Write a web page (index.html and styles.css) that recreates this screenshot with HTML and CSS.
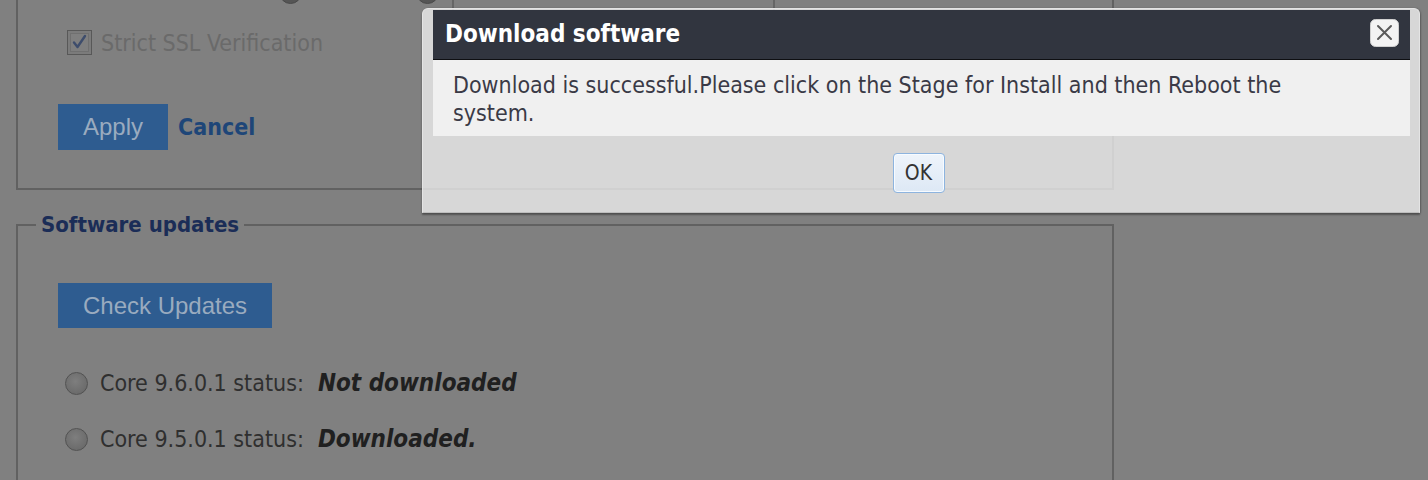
FILE: index.html
```html
<!DOCTYPE html>
<html lang="en">
<head>
<meta charset="utf-8">
<title>Software updates</title>
<link rel="stylesheet" href="styles.css">
</head>
<body>
<div class="page">
  <div class="panel">
    <div class="server-row">
      <span class="radio radio-dark"></span>
      <span class="server-label">Default</span>
      <span class="radio radio-dark radio-second"></span>
      <span class="url-box"></span>
    </div>
    <label class="ssl-row">
      <span class="checkbox">
        <svg width="25" height="25" viewBox="0 0 25 25"><rect x="0.5" y="0.5" width="24" height="24" fill="#7b7b7b" stroke="#585858"/><rect x="3.5" y="3.5" width="18" height="18" fill="#7f7f7f" stroke="#707070"/><path d="M7 12.5 L10.5 17 L18 6" fill="none" stroke="#3e4d6c" stroke-width="2.4" stroke-linecap="round" stroke-linejoin="round"/></svg>
      </span>
      <span class="ssl-text">Strict SSL Verification</span>
    </label>
    <div class="actions">
      <button class="btn-primary btn-apply">Apply</button>
      <a class="cancel-link">Cancel</a>
    </div>
  </div>

  <fieldset class="updates">
    <legend>Software updates</legend>
    <div class="updates-body">
      <button class="btn-primary btn-check">Check Updates</button>
      <div class="core-row first">
        <span class="radio"></span>
        <span class="core-text">Core 9.6.0.1 status:</span>
        <em class="core-status">Not downloaded</em>
      </div>
      <div class="core-row">
        <span class="radio"></span>
        <span class="core-text">Core 9.5.0.1 status:</span>
        <em class="core-status">Downloaded.</em>
      </div>
    </div>
  </fieldset>
</div>

<div class="dialog">
  <div class="dialog-title">
    <span class="dialog-title-text">Download software</span>
    <span class="dialog-close">
      <svg width="29" height="28" viewBox="0 0 29 28"><rect x="0.5" y="0.5" width="28" height="27" rx="5" fill="#f3f3f3" stroke="#d0d0d0"/><path d="M8 7 L21 20 M21 7 L8 20" stroke="#5a5a5a" stroke-width="2" stroke-linecap="round"/></svg>
    </span>
  </div>
  <div class="dialog-body">Download is successful.Please click on the Stage for Install and then Reboot the system.</div>
  <div class="dialog-footer">
    <button class="btn-ok">OK</button>
  </div>
</div>
</body>
</html>
```

FILE: styles.css
```css
* { box-sizing: border-box; }

html, body {
  margin: 0;
  padding: 0;
  height: 480px;
  overflow: hidden;
}

body {
  background: #808080;
  font-family: "DejaVu Sans Condensed", "DejaVu Sans", sans-serif;
  font-stretch: condensed;
  font-size: 23px;
  color: #303030;
  position: relative;
}

.page {
  width: 1428px;
}

/* ---------- first panel (partially scrolled out) ---------- */
.panel {
  margin: -80px 0 0 16px;
  width: 1098px;
  border: 2px solid #616161;
  padding: 0 0 38px 40px;
}

.server-row {
  margin-top: 50px;
  height: 40px;
  display: flex;
  align-items: center;
}

.radio {
  width: 23px;
  height: 23px;
  border-radius: 50%;
  border: 1px solid #525252;
  background: radial-gradient(circle at 45% 40%, #7e7e7e 0%, #6c6c6c 70%, #606060 100%);
  flex: none;
}

.radio-dark {
  margin-left: 221px;
  background: #555;
  border-color: #4a4a4a;
}

.server-label {
  margin-left: 8px;
  color: #2e2e2e;
}

.radio-dark.radio-second {
  margin-left: 30px;
}

.url-box {
  margin-left: 13px;
  width: 323px;
  height: 40px;
  border: 2px solid #666;
}

.ssl-row {
  margin-top: 18px;
  height: 25px;
  display: flex;
  align-items: center;
}

.checkbox {
  margin-left: 9px;
  width: 25px;
  height: 25px;
  display: block;
}

.checkbox svg { display: block; }

.ssl-text {
  margin-left: 9px;
  color: #6a6a6a;
}

.actions {
  margin-top: 49px;
  display: flex;
  align-items: center;
}

.btn-primary {
  font-family: "Liberation Sans", Arial, sans-serif;
  font-size: 24px;
  color: #9aabbf;
  background: #2e5c90;
  border: none;
  padding: 0;
  margin: 0;
}

.btn-apply {
  width: 110px;
  height: 46px;
}

.cancel-link {
  margin-left: 10px;
  font-weight: bold;
  color: #1e4678;
  font-size: 23px;
}

/* ---------- Software updates ---------- */
.updates {
  margin: 22px 0 0 16px;
  width: 1098px;
  height: 320px;
  border: 2px solid #616161;
  padding: 0;
}

.updates legend {
  margin-left: 18px;
  padding: 0 5px;
  font-size: 22px;
  line-height: 26px;
  font-weight: bold;
  color: #1b2d57;
}

.updates-body {
  padding: 45px 0 0 40px;
}

.btn-check {
  display: block;
  width: 214px;
  height: 45px;
}

.core-row {
  margin-top: 26px;
  height: 30px;
  display: flex;
  align-items: center;
}

.core-row.first { margin-top: 40px; }

.core-row .radio { margin-left: 7px; }

.core-text {
  margin-left: 12px;
  color: #2f2f2f;
}

.core-status {
  margin-left: 14px;
  font-weight: bold;
  font-style: italic;
  font-size: 24px;
  color: #202020;
}

/* ---------- dialog ---------- */
.dialog {
  position: absolute;
  left: 422px;
  top: 8px;
  width: 998px;
  border: 1px solid #e4e4e4;
  border-bottom-color: #bdbdbd;
  border-radius: 6px 6px 0 0;
  background: rgba(236, 236, 236, 0.8);
  box-shadow: 0 2px 2px rgba(0, 0, 0, 0.35), 1px 0 2px rgba(0, 0, 0, 0.2);
  padding: 1px 9px 0 10px;
}

.dialog-title {
  height: 50px;
  background: #31353f;
  border-bottom: 1px solid #0e0f12;
  display: flex;
  align-items: center;
  justify-content: space-between;
  padding: 0 11px 0 12px;
}

.dialog-title-text {
  color: #ffffff;
  font-weight: bold;
  font-size: 24px;
  margin-top: -2px;
}

.dialog-close {
  width: 29px;
  height: 28px;
  margin-top: -3px;
}

.dialog-close svg { display: block; }

.dialog-body {
  height: 76px;
  background: #f0f0f0;
  padding: 11px 80px 0 20px;
  line-height: 28px;
  color: #3a3a46;
}

.dialog-footer {
  height: 76px;
  display: flex;
  justify-content: center;
  padding-top: 17px;
}

.btn-ok {
  width: 52px;
  height: 40px;
  margin-left: -6px;
  padding: 0;
  font-family: "DejaVu Sans Condensed", "DejaVu Sans", sans-serif;
  font-stretch: condensed;
  font-size: 21px;
  color: #333;
  background: linear-gradient(#eef4fb, #dde8f5);
  border: 1px solid #8db4df;
  border-radius: 4px;
  box-shadow: inset 0 0 0 1px #f7fbff;
}
```
